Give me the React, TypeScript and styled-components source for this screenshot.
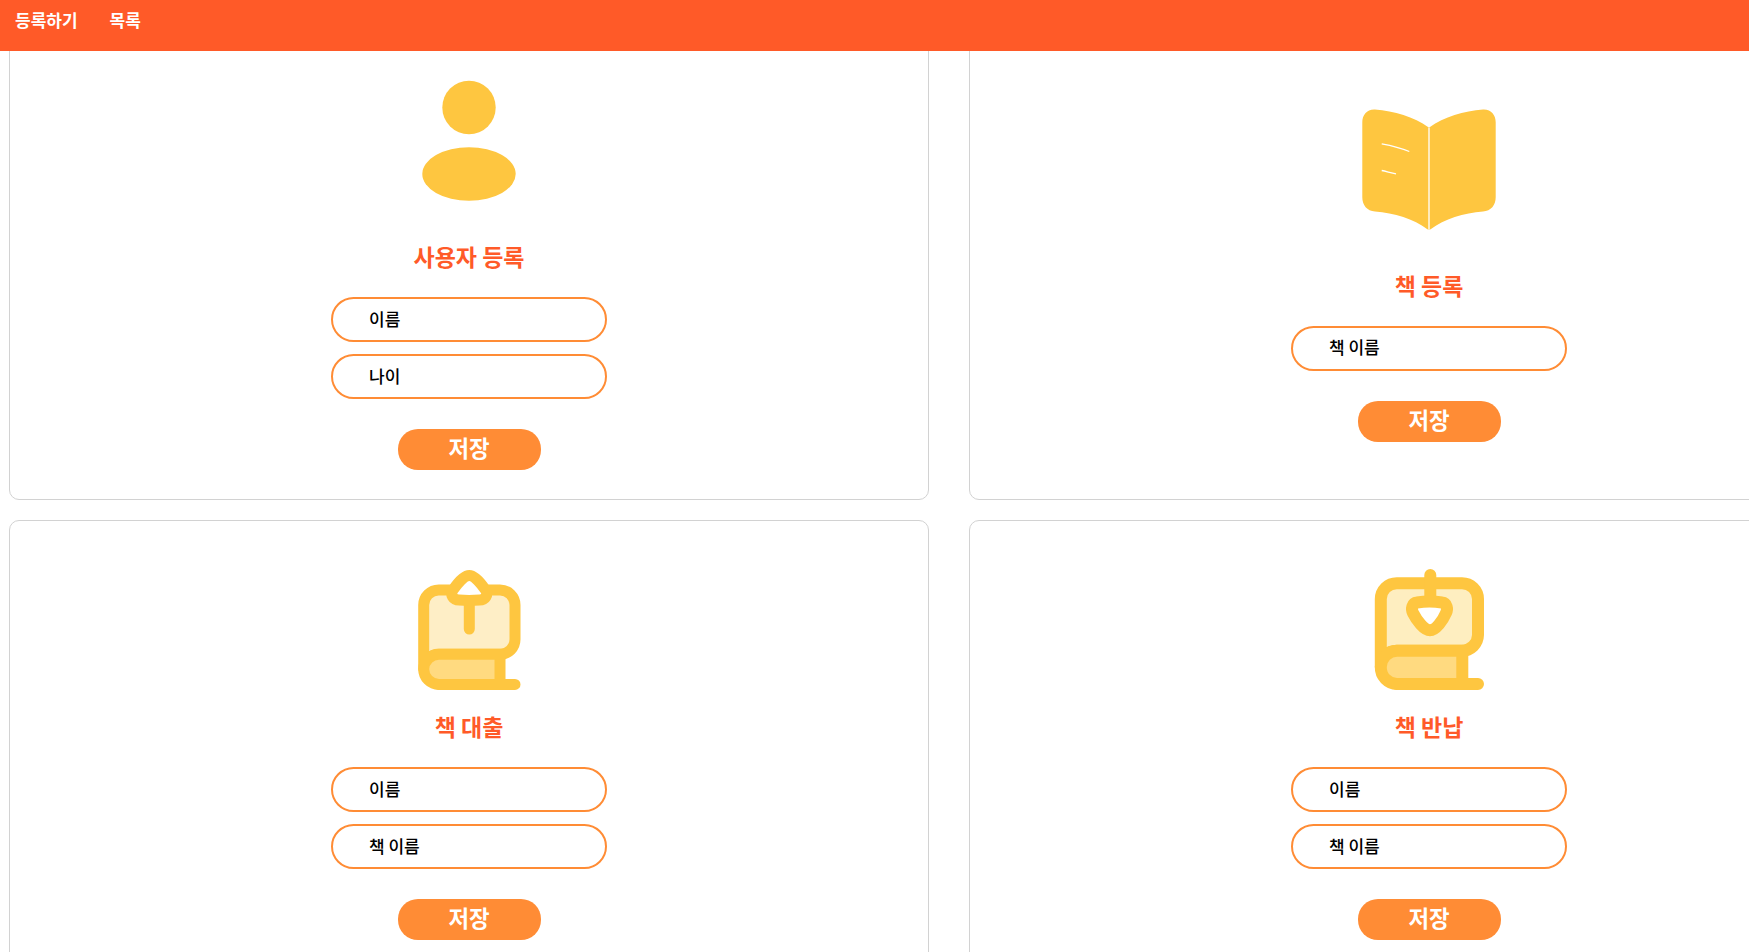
import styled, { createGlobalStyle } from "styled-components";

const YELLOW = "#fec640";
const FONT = `"Noto Sans CJK KR", "Noto Sans", sans-serif`;

const GlobalStyle = createGlobalStyle`
  html, body {
    margin: 0;
    background: #fff;
    font-family: ${FONT};
  }
  #root {
    width: 1890px;
  }
`;

const Header = styled.header`
  position: relative;
  z-index: 1;
  height: 51px;
  background: #ff5a28;
  display: flex;
  gap: 32px;
  padding: 8px 0 0 15px;
  box-sizing: border-box;
`;

const NavLink = styled.a`
  color: #fff;
  font-size: 17px;
  font-weight: 700;
  line-height: 24px;
`;

const Grid = styled.main`
  display: grid;
  grid-template-columns: 920px 920px;
  grid-template-rows: 460px 450px;
  column-gap: 40px;
  row-gap: 20px;
  padding: 0 9px;
  margin-top: -11px;
`;

const Card = styled.section`
  border: 1px solid #d2d2d2;
  border-radius: 10px;
  box-sizing: border-box;
  display: flex;
  flex-direction: column;
  align-items: center;
  justify-content: center;
  padding-bottom: 1px;

  /* top row runs up behind the header */
  &:nth-child(-n + 2) {
    padding-top: 10px;
  }
`;

const Icon = styled.svg`
  display: block;
  width: 160px;
  height: 160px;
  flex: none;
`;

const Title = styled.h2`
  margin: 0 0 22px;
  height: 36px;
  line-height: 34px;
  font-size: 23px;
  font-weight: 700;
  color: #ff5a28;
`;

const Fields = styled.div`
  display: flex;
  flex-direction: column;
  gap: 12px;
  margin-bottom: 30px;
`;

const Field = styled.input`
  width: 276px;
  height: 45px;
  box-sizing: border-box;
  border: 2px solid #ff8c35;
  border-radius: 23px;
  background: #fff;
  padding: 0 0 3px 36px;
  font-family: ${FONT};
  font-size: 17px;
  font-weight: 500;
  outline: none;

  &::placeholder {
    color: #000;
    opacity: 1;
  }
`;

const SaveButton = styled.button`
  width: 143px;
  height: 41px;
  border: 0;
  border-radius: 20px;
  background: #ff8c35;
  color: #fff;
  padding: 0 0 7px;
  font-family: ${FONT};
  font-size: 22.4px;
  font-weight: 700;
  line-height: 36px;
`;

const UserIcon = () => (
  <Icon viewBox="0 -1 160 160">
    <circle cx="80" cy="27.5" r="26.7" fill={YELLOW} />
    <ellipse cx="80" cy="94" rx="46.7" ry="26.7" fill={YELLOW} />
  </Icon>
);

const BookIcon = () => (
  <Icon viewBox="0 -1 160 160">
    <path
      d="M79.4 18.2C65 8 45 2 26 .5 18 0 13.3 6 13.3 13.2V88.2C13.3 96 18 102 26 102.5 45 104 65 110 78 120 79 120.7 81 120.7 82 120 95 110 115 104 134 102.5 142 102 146.7 96 146.7 88.2V13.2C146.7 6 142 0 134 .5 115 2 95 8 80.6 18.2Z"
      fill={YELLOW}
    />
    <path d="M80 18.4V120.4" stroke="#fff" strokeWidth="1.3" fill="none" />
    <path d="M32.7 34.8C42 36.5 52 39 60.3 42.5M32.7 61.5C37.5 62.5 42 63.8 47 64.8" stroke="#fff" strokeWidth="1.3" fill="none" />
  </Icon>
);

const BorrowIcon = () => (
  <Icon viewBox="0 0 160 160">
    <g stroke={YELLOW} strokeWidth="11" strokeLinecap="round" strokeLinejoin="round">
      <path d="M34.7 120V56A15 15 0 0 1 49.7 41H111A15 15 0 0 1 126 56V90A15 15 0 0 1 111 105.3H50A15.3 15.3 0 0 0 34.7 120Z" fill="#feeec6" />
      <path d="M34.7 120A15.3 15.3 0 0 1 50 105.3H111V135.4H50A15.3 15.3 0 0 1 34.7 120Z" fill="#ffda80" />
      <path d="M50 135.4H126M80.3 50V80" fill="none" />
      <path d="M70 51C64 51 61 46 64 41 68 35 75 26.5 80.3 26.5 85.5 26.5 92.5 35 96.5 41 99.5 46 96.5 51 90.5 51 84 51.5 76 51.5 70 51Z" fill="#fff" />
    </g>
  </Icon>
);

const ReturnIcon = () => (
  <Icon viewBox="0 0 160 160">
    <g stroke={YELLOW} strokeWidth="12" strokeLinecap="round" strokeLinejoin="round">
      <path d="M31.8 118V50A16 16 0 0 1 47.8 34.2H113A16 16 0 0 1 129 50V86A16 16 0 0 1 113 101.7H48A16 16 0 0 0 31.8 118Z" fill="#feeec0" />
      <path d="M31.8 118A16.5 16.5 0 0 1 48 101.7H113.3V135H48A16.5 16.5 0 0 1 31.8 118Z" fill="#ffda80" />
      <path d="M48 135H129M81.3 26V50" fill="none" />
      <path d="M68 53.5C63 54 62 60 64 64 67.5 71 75 81.3 81 81.3 87 81.3 94 71 97 64 99 60 98 54 93 53.5 86 52.5 75 52.5 68 53.5Z" fill="#fff" />
    </g>
  </Icon>
);

const cards = [
  { title: "사용자 등록", icon: <UserIcon />, fields: ["이름", "나이"] },
  { title: "책 등록", icon: <BookIcon />, fields: ["책 이름"] },
  { title: "책 대출", icon: <BorrowIcon />, fields: ["이름", "책 이름"] },
  { title: "책 반납", icon: <ReturnIcon />, fields: ["이름", "책 이름"] },
];

const App = () => (
  <>
    <GlobalStyle />
    <Header>
      <NavLink>등록하기</NavLink>
      <NavLink>목록</NavLink>
    </Header>
    <Grid>
      {cards.map((card) => (
        <Card key={card.title}>
          {card.icon}
          <Title>{card.title}</Title>
          <Fields>
            {card.fields.map((field) => (
              <Field key={field} placeholder={field} />
            ))}
          </Fields>
          <SaveButton>저장</SaveButton>
        </Card>
      ))}
    </Grid>
  </>
);

export default App;
